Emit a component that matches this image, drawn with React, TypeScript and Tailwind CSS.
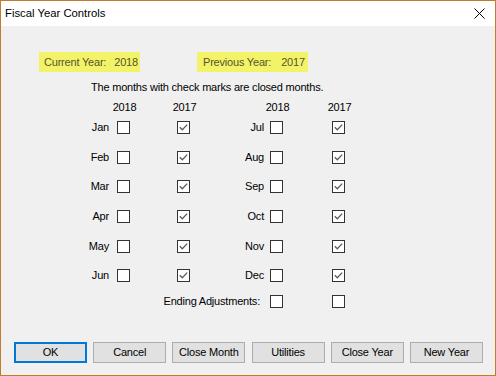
import React from "react";

function Box({ checked }: { checked?: boolean }) {
  return (
    <div className="w-[13px] h-[13px] border border-[#333333] bg-white flex items-center justify-center">
      {checked && (
        <svg width="11" height="11" viewBox="0 0 11 11">
          <polyline points="1.8,5.2 4.3,7.8 9.2,2.6" fill="none" stroke="#5a5a5a" strokeWidth="1.25" />
        </svg>
      )}
    </div>
  );
}

const left = ["Jan", "Feb", "Mar", "Apr", "May", "Jun"];
const right = ["Jul", "Aug", "Sep", "Oct", "Nov", "Dec"];

function Header({ t }: { t: string }) {
  return (
    <div className="w-[13px] flex justify-center whitespace-nowrap">
      <span className="ml-[2px]">{t}</span>
    </div>
  );
}

export default function App() {
  const buttons = ["OK", "Cancel", "Close Month", "Utilities", "Close Year", "New Year"];
  return (
    <div
      className="w-[496px] h-[376px] border border-[#c27a30] flex flex-col text-black overflow-hidden"
      style={{ fontFamily: "'Liberation Sans', Arial, sans-serif" }}
    >
      <div className="h-[25px] bg-white flex items-center justify-between pl-[4px] pr-[10px] shrink-0">
        <span className="text-[11.3px] leading-none">Fiscal Year Controls</span>
        <svg width="11" height="11" viewBox="0 0 11 11">
          <path d="M0.5 0.5 L10.5 10.5 M10.5 0.5 L0.5 10.5" stroke="#000" strokeWidth="1" />
        </svg>
      </div>
      <div className="flex-1 bg-[#f0f0f0] flex flex-col pt-[26px] pb-[12px] text-[11px] tracking-[-0.2px]">
        <div className="flex ml-[38px] text-[#55552a] leading-[13px]">
          <div className="w-[101px] h-[20px] bg-[#f3f36a] flex items-center pl-[5px]">
            <span>Current Year:</span>
            <span className="ml-[8px]">2018</span>
          </div>
          <div className="w-[111px] h-[20px] bg-[#f3f36a] flex items-center pl-[6px] ml-[57px]">
            <span>Previous Year:</span>
            <span className="ml-[10px]">2017</span>
          </div>
        </div>
        <div className="ml-[90px] mt-[9px] leading-[13px]">The months with check marks are closed months.</div>
        <div className="ml-[79px] mt-[7px] grid grid-cols-[37px_13px_47px_13px_80px_13px_49px_13px]">
          <div className="col-span-8 grid grid-cols-[37px_13px_47px_13px_80px_13px_49px_13px] h-[12px] leading-[12px]">
            <div />
            <Header t="2018" />
            <div />
            <Header t="2017" />
            <div />
            <Header t="2018" />
            <div />
            <Header t="2017" />
          </div>
          {left.map((m, i) => (
            <div
              key={m}
              className="col-span-8 grid grid-cols-[37px_13px_47px_13px_80px_13px_49px_13px] h-[29.6px] items-center"
            >
              <div className="text-right pr-[8px] leading-[13px]">{m}</div>
              <Box />
              <div />
              <Box checked />
              <div className="text-right pr-[6px] leading-[13px]">{right[i]}</div>
              <Box />
              <div />
              <Box checked />
            </div>
          ))}
          <div className="col-span-8 grid grid-cols-[37px_13px_47px_13px_80px_13px_49px_13px] h-[22px] items-center">
            <div className="col-span-5 text-right pr-[10px] leading-[13px]">Ending Adjustments:</div>
            <Box />
            <div />
            <Box />
          </div>
        </div>
        <div className="mt-auto flex gap-[6.2px] pl-[13px]">
          {buttons.map((b, i) => (
            <div
              key={b}
              className={
                i === 0
                  ? "w-[73px] h-[21px] bg-[#e1e1e1] border-2 border-[#0078d7] flex items-center justify-center"
                  : "w-[73px] h-[21px] bg-[#e1e1e1] border border-[#adadad] flex items-center justify-center"
              }
            >
              {b}
            </div>
          ))}
        </div>
      </div>
    </div>
  );
}
